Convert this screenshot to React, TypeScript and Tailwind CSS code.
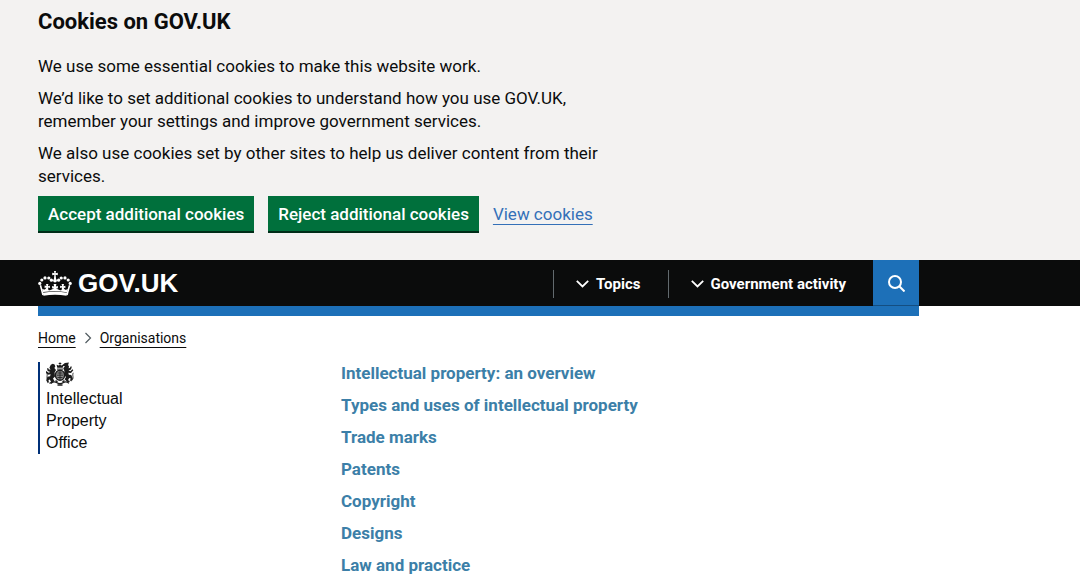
import React from "react";

const collections = [
  { label: "Intellectual property: an overview", href: "#overview" },
  { label: "Types and uses of intellectual property", href: "#types" },
  { label: "Trade marks", href: "#trade-marks" },
  { label: "Patents", href: "#patents" },
  { label: "Copyright", href: "#copyright" },
  { label: "Designs", href: "#designs" },
  { label: "Law and practice", href: "#law" },
];

function Crown() {
  // left half of the arch, mirrored for the right
  const jewels = [
    [1.8, 12.4],
    [3.8, 9],
    [7, 6.9],
    [10.8, 7],
    [13.4, 9.2],
  ];
  return (
    <svg viewBox="0 0 34 25" className="h-[25px] w-[34px]" fill="#fff" aria-hidden="true">
      <path d="M16 0h2l-.4 2.200 2.200-.4v2.400l-2.200-.4.5 4.200h-2.200l.5-4.200-2.200.4V1.800l2.200.4z" />
      <circle cx="17" cy="9.600" r="1.900" />
      {jewels.map(([x, y]) => (
        <React.Fragment key={x}>
          <circle cx={x} cy={y} r="1.600" />
          <circle cx={34 - x} cy={y} r="1.600" />
        </React.Fragment>
      ))}
      <path d="M2.400 14.200Q3.800 19 5 24M31.600 14.200Q30.200 19 29 24" stroke="#fff" strokeWidth="1.600" fill="none" />
      <path d="M8 13h2.400l-.5 2.200 2-.5v2.400l-1.900-.5.4 2.400c1.800.6 3.600-.2 5.600-2l-1.900.5v-2.400l2 .5-.5-2.600h2.800l-.5 2.600 2-.5v2.400l-1.900-.5c2 1.800 3.800 2.600 5.600 2l.4-2.400-1.900.5v-2.400l2 .5-.5-2.200H26l-.5 2.200 1.900-.5v2.400l-1.700-.4c.8 2.200 2.200 2.600 4.200 1.200l-.9 3.400Q17 19.100 5 21.100l-.9-3.400c2 1.400 3.400 1 4.200-1.200l-1.700.4v-2.400l1.900.5z" />
      <path d="M4.900 21.800Q17 19.800 29.100 21.800L28.600 24.800Q17 22.800 5.400 24.800z" />
    </svg>
  );
}

function Crest() {
  return (
    <svg viewBox="0 0 28 24" className="mb-0.5 h-6 w-7" fill="#1c1c1c" aria-hidden="true">
      <path d="M13.600.2h.8v.9h.9v.8h-.9v1l1.100.5 1.900-.6-.7 3h-5.400l-.7-3 1.900.6 1.100-.5v-1h-.9v-.8h.9z" />
      <path d="M11 6.600h6v1h-6z" />
      <path d="M4.800 2.800l2-1 1.800.8.700 2-.9 1.400 1.600 2-1.400 2.600.4 4-2 2 1.400 2.400-2.800 2.600-2.300.1.200-1.200 1.600-.6-1.300-2.300-1.600.6.800 1.800-1.200 1.200-1.600-3 1.300-3.400 2.600-.6.500-2-2.600.5-2.500-2.400.8-1.200 2.300 1.700 1.700-.7-2.600-1.100-.7-2.600 1.100-.4.800 1.600 1.700-.2-1.200-1.700z" />
      <path d="M22.900.4l-.8 2.600 1 1.700-.6 1.500 1.400-.2.900-1.700 1 .5-.8 2.700-2.500 1.100 1.900.6 2.100-2 .8 1.100-2.300 2.700-2.700-.3.500 2 2.500.4 1.500 3.400-1.600 3-1.200-1.200.8-1.800-1.600-.6-1.200 2.300 1.500.6.200 1.200-2.300-.1-2.800-2.600 1.400-2.400-2-2 .4-4-1.200-2.600 1.800-2-2.300-.2-.3-1.200 2.500-1.800z" />
      <g fill="none" stroke="#1c1c1c">
        <path d="M2.200 18.500C-.4 15.500 2.200 13.300.7 10.800M25.800 18.500c2.600-3 0-5.200 1.500-7.700" strokeWidth=".9" />
        <ellipse cx="14" cy="13.200" rx="4.600" ry="5" strokeWidth="1.500" fill="#8a8a8a" />
        <path d="M11.500 11h5M11 13.200h6M11.500 15.500h5M14 9v8.500" strokeWidth=".8" />
        <path d="M5 21.200q3-2.200 5.500-.7 3.500 2.500 7 0 2.500-1.500 5.500.7" strokeWidth="1.300" />
        <path d="M9.500 18.600l2 1.200M18.500 18.600l-2 1.200M11.500 23h5" strokeWidth="1.500" />
      </g>
    </svg>
  );
}

function CookieBanner() {
  return (
    <section aria-label="Cookies on GOV.UK" className="bg-[#f3f2f1] px-[38px] pt-2 pb-[27px]">
      <div className="max-w-[567px]">
        <h2 className="mb-[19px] text-[22px] leading-7 font-bold">Cookies on GOV.UK</h2>
        <div className="space-y-[9px] text-[17px] leading-[23px]">
          <p>We use some essential cookies to make this website work.</p>
          <p>
            We’d like to set additional cookies to understand how you use GOV.UK, remember your
            settings and improve government services.
          </p>
          <p>We also use cookies set by other sites to help us deliver content from their services.</p>
        </div>
      </div>
      <div className="mt-2 flex flex-wrap items-center gap-[14px] text-[17px] leading-[23px]">
        <button type="button" className="border-b-2 border-[#002d18] bg-[#00703c] px-[10px] pt-[7px] pb-[5px] font-medium text-white">
          Accept additional cookies
        </button>
        <button type="button" className="border-b-2 border-[#002d18] bg-[#00703c] px-[10px] pt-[7px] pb-[5px] font-medium text-white">
          Reject additional cookies
        </button>
        <a href="#cookies" className="text-[#3470b8] underline decoration-1 underline-offset-4">
          View cookies
        </a>
      </div>
    </section>
  );
}

function NavButton({ label }: { label: string }) {
  return (
    <button type="button" className="flex h-7 items-center gap-[7px] border-l border-[#626a6e] pr-[27px] pl-[22px] text-[15px] leading-5 font-bold text-white">
      <svg viewBox="0 0 13 8" className="h-2 w-[13px]" fill="none" stroke="#fff" strokeWidth="1.800" aria-hidden="true">
        <path d="M.8.8l5.700 5.700L12.200.8" />
      </svg>
      {label}
    </button>
  );
}

function Header() {
  return (
    <header>
      <div className="bg-[#0b0c0c] pl-[38px]">
        <div className="flex h-[46px] max-w-[881px] items-center">
          <a href="#home" className="mr-auto flex items-center gap-[6px] font-['Liberation_Sans',Arial,sans-serif] text-[26px] leading-7 font-bold text-white">
            <Crown />
            GOV.UK
          </a>
          <nav className="flex items-center pt-0.5">
            <NavButton label="Topics" />
            <NavButton label="Government activity" />
          </nav>
          <button type="button" aria-label="Search GOV.UK" className="flex h-full w-[46px] items-center justify-center border-b border-[#144e81] bg-[#1d70b8]">
            <svg viewBox="0 0 18 18" className="size-[18px]" fill="none" stroke="#fff" strokeWidth="2" aria-hidden="true">
              <circle cx="8" cy="8" r="6" />
              <path d="M12.300 12.300l5.200 5.200" />
            </svg>
          </button>
        </div>
      </div>
      <div className="pl-[38px]">
        <div className="h-[10px] max-w-[881px] bg-[#1d70b8]" />
      </div>
    </header>
  );
}

export default function App() {
  return (
    <div className="bg-white font-[Roboto,Arial,sans-serif] text-[#0b0c0c]">
      <CookieBanner />
      <Header />
      <div className="max-w-[957px] px-[38px]">
        <nav aria-label="Breadcrumb" className="flex items-center gap-2 pt-3 text-[14px] leading-5">
          <a href="#home" className="underline decoration-1 underline-offset-4">Home</a>
          <svg viewBox="0 0 8 12" className="h-3 w-2" fill="none" stroke="#505a5f" strokeWidth="1.200" aria-hidden="true">
            <path d="M1.500 1l5 5-5 5" />
          </svg>
          <a href="#organisations" className="underline decoration-1 underline-offset-4">Organisations</a>
        </nav>
        <main className="flex items-start pt-[14px]">
          <div className="w-[303px] shrink-0">
            <a href="#ipo" className="block w-32 border-l-2 border-[#003078] pl-[6px] font-['Liberation_Sans',Arial,sans-serif] text-[16px] leading-[22px]">
              <Crest />
              Intellectual
              <br />
              Property
              <br />
              Office
            </a>
          </div>
          <ul className="space-y-[9px] text-[17px] leading-[23px] font-bold text-[#3c7fa8]">
            {collections.map((item) => (
              <li key={item.href}>
                <a href={item.href}>{item.label}</a>
              </li>
            ))}
          </ul>
        </main>
      </div>
    </div>
  );
}
